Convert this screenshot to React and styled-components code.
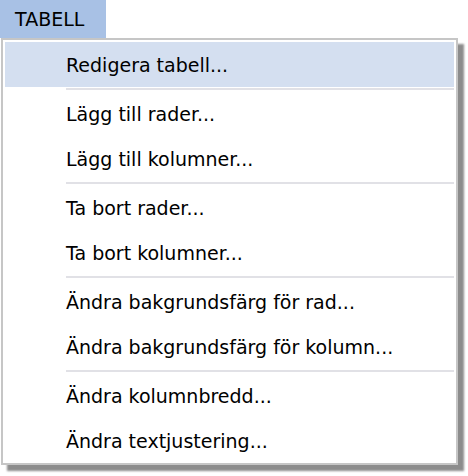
import React from 'react';
import styled, { createGlobalStyle } from 'styled-components';

const GlobalStyle = createGlobalStyle`
  html, body {
    margin: 0;
    padding: 0;
    background: #ffffff;
  }
  body {
    font-family: "DejaVu Sans", Verdana, sans-serif;
    color: #000000;
  }
`;

const Wrapper = styled.div`
  width: 468px;
  height: 476px;
  display: flex;
  flex-direction: column;
  align-items: flex-start;
`;

const Tab = styled.div`
  height: 38px;
  width: 106px;
  box-sizing: border-box;
  padding-left: 15px;
  display: flex;
  align-items: center;
  background: #a8c1e5;
  font-size: 19px;
`;

const Menu = styled.ul`
  list-style: none;
  margin: 0 0 0 1px;
  width: 457px;
  box-sizing: border-box;
  border: 2px solid #c6c6c6;
  padding: 2px 2px 0;
  background: #ffffff;
  box-shadow: 6px 6px 2px rgba(0, 0, 0, 0.45);
`;

const Item = styled.li`
  height: 45px;
  display: flex;
  align-items: center;
  padding-left: 61px;
  font-size: 19px;
  background: ${({ active }) => (active ? '#d4dff0' : 'transparent')};
`;

const Separator = styled.li`
  height: 4px;
  display: flex;
  align-items: center;
  padding-left: 61px;
  &::after {
    content: "";
    flex: 1;
    height: 2px;
    background: #e1e1e6;
  }
`;

const groups = [
  ['Redigera tabell...'],
  ['Lägg till rader...', 'Lägg till kolumner...'],
  ['Ta bort rader...', 'Ta bort kolumner...'],
  ['Ändra bakgrundsfärg för rad...', 'Ändra bakgrundsfärg för kolumn...'],
  ['Ändra kolumnbredd...', 'Ändra textjustering...'],
];

export default function App() {
  return (
    <Wrapper>
      <GlobalStyle />
      <Tab>TABELL</Tab>
      <Menu>
        {groups.map((group, gi) => (
          <React.Fragment key={gi}>
            {gi > 0 && <Separator />}
            {group.map((label, i) => (
              <Item key={label} active={gi === 0 && i === 0}>{label}</Item>
            ))}
          </React.Fragment>
        ))}
      </Menu>
    </Wrapper>
  );
}
